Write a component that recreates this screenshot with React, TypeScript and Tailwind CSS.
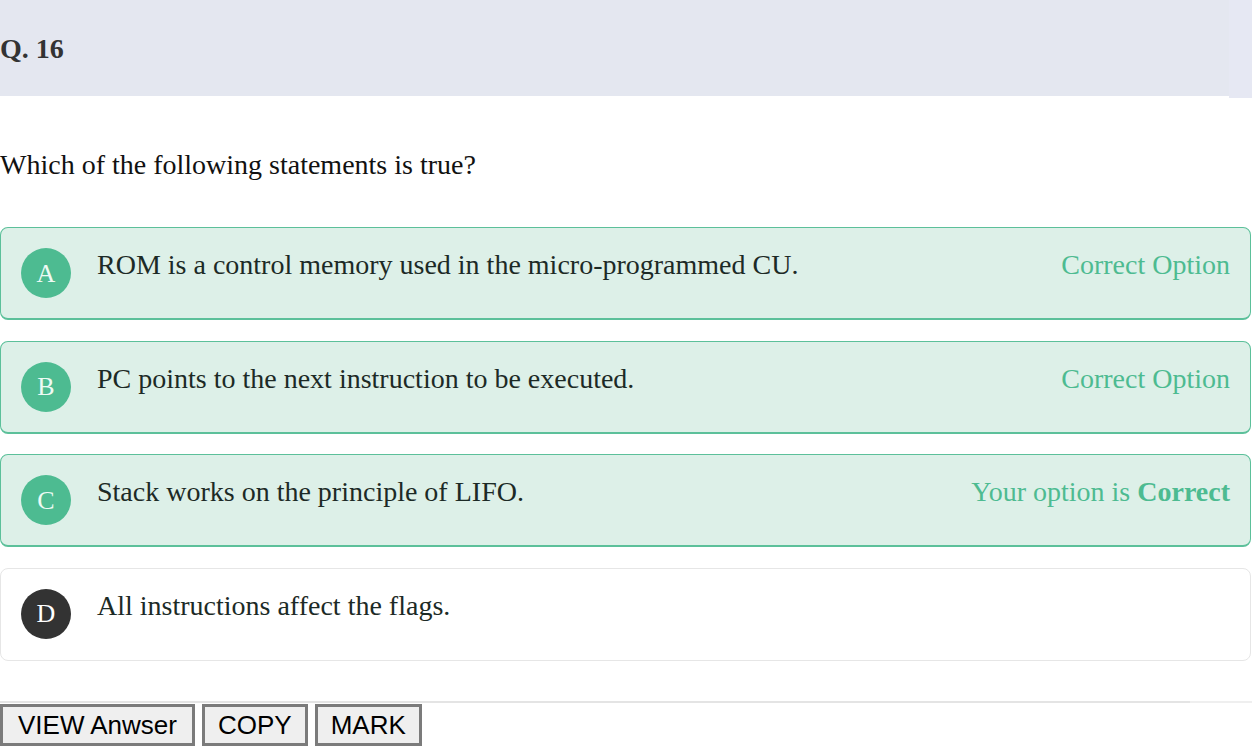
import React from 'react';

type Option = {
  key: string;
  text: string;
  state: 'correct' | 'yours' | 'none';
};

const options: Option[] = [
  { key: 'A', text: 'ROM is a control memory used in the micro-programmed CU.', state: 'correct' },
  { key: 'B', text: 'PC points to the next instruction to be executed.', state: 'correct' },
  { key: 'C', text: 'Stack works on the principle of LIFO.', state: 'yours' },
  { key: 'D', text: 'All instructions affect the flags.', state: 'none' },
];

const App = () => {
  return (
    <div className="w-[1252px] h-[746px] overflow-hidden bg-white font-['Liberation_Serif',serif] text-[#222]">
      {/* Header band */}
      <div className="flex">
        <div className="flex-1 h-[96px] bg-[#e4e7f0] flex items-center">
          <h2 className="text-[28px] font-bold text-[#333] leading-none pt-[2px]">Q. 16</h2>
        </div>
        <div className="w-[23px] h-[98px] bg-[#e6e8f3]"></div>
      </div>

      <p className="mt-[46px] text-[28px] leading-[42px] text-[#111]">
        Which of the following statements is true?
      </p>

      <div className="mt-[41px] flex flex-col gap-[20.67px] pr-px">
        {options.map((opt) => {
          const green = opt.state !== 'none';
          return (
            <div
              key={opt.key}
              className={
                green
                  ? 'h-[93px] rounded-[8px] border border-b-2 border-[#5cc09a] bg-[#ddf0e8] px-[20px] pt-[16px] flex items-start'
                  : 'h-[93px] rounded-[8px] border border-[#e6e6e6] bg-white px-[20px] pt-[16px] flex items-start'
              }
            >
              <div
                className={
                  green
                    ? 'mt-[4px] w-[50px] h-[50px] shrink-0 rounded-full bg-[#4dbb91] text-[#eefaf4] flex items-center justify-center text-[26px]'
                    : 'mt-[4px] w-[50px] h-[50px] shrink-0 rounded-full bg-[#333333] text-white flex items-center justify-center text-[26px]'
                }
              >
                {opt.key}
              </div>
              <div className="ml-[26px] flex-1 text-[28px] leading-[42px] text-[#1c2a26]">{opt.text}</div>
              {opt.state === 'correct' && (
                <div className="text-[28px] leading-[42px] text-[#4dbb91]">Correct Option</div>
              )}
              {opt.state === 'yours' && (
                <div className="text-[28px] leading-[42px] text-[#4dbb91]">
                  Your option is <span className="font-bold">Correct</span>
                </div>
              )}
            </div>
          );
        })}
      </div>

      {/* Divider */}
      <div className="mt-[40px] flex">
        <div className="flex-1 h-[2px] bg-[#e4e4e4]"></div>
        <div className="w-[62px] h-[2px] bg-[#efefef]"></div>
      </div>

      <div className="mt-[1px] flex gap-[7px] font-['Liberation_Sans',Arial,sans-serif]">
        <button className="h-[42px] px-[15px] border-[3px] border-[#7b7b7b] bg-[#efefef] text-[26px] leading-none text-black">
          VIEW Anwser
        </button>
        <button className="h-[42px] px-[13px] border-[3px] border-[#7b7b7b] bg-[#efefef] text-[26px] leading-none text-black">
          COPY
        </button>
        <button className="h-[42px] px-[13px] border-[3px] border-[#7b7b7b] bg-[#efefef] text-[26px] leading-none text-black">
          MARK
        </button>
      </div>
    </div>
  );
};

export default App;
